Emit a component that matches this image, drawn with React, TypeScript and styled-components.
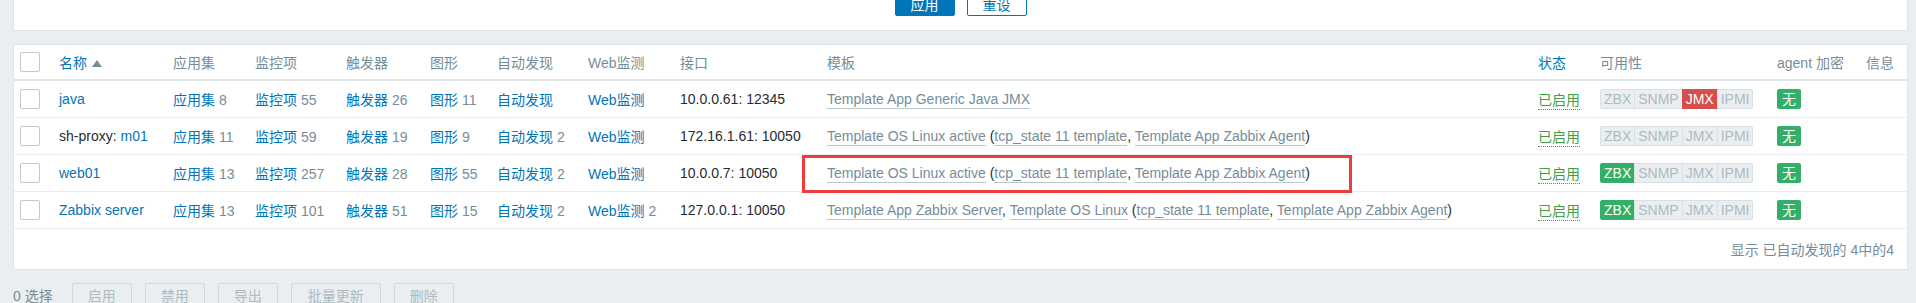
import React from 'react';
import styled, { createGlobalStyle } from 'styled-components';

const GlobalStyle = createGlobalStyle`
  body {
    margin: 0;
    background: #ebeef0;
    font-family: "Liberation Sans", Arial, "Noto Sans CJK SC", sans-serif;
    font-size: 14px;
    color: #1f2c33;
  }
`;

const Page = styled.div`
  padding: 0 8px 0 13px;
  margin-top: -8px;
`;

// filter
const FilterPanel = styled.div`
  background: #fff;
  border: 1px solid #dfe4e7;
  border-top: none;
  display: flex;
  justify-content: center;
  gap: 12px;
  padding-bottom: 14px;
`;

const FilterButton = styled.button<{ $primary?: boolean }>`
  box-sizing: border-box;
  width: 60px;
  height: 24px;
  font: inherit;
  border-radius: 2px;
  border: 1px solid #0275b8;
  background: ${(p) => (p.$primary ? '#0275b8' : '#fff')};
  color: ${(p) => (p.$primary ? '#fff' : '#0275b8')};
  padding: 0;
`;

// table
const TablePanel = styled.div`
  position: relative;
  margin-top: 13px;
  background: #fff;
  border: 1px solid #dfe4e7;
`;

const cols = '45px 114px 82px 91px 84px 67px 91px 92px 147px 1fr 62px 177px 89px 41px';

const HeadRow = styled.div`
  display: grid;
  grid-template-columns: ${cols};
  align-items: center;
  height: 34px;
  border-bottom: 2px solid #dfe4e7;
  color: #768d99;
  white-space: nowrap;
`;

const Row = styled.div`
  position: relative;
  display: grid;
  grid-template-columns: ${cols};
  align-items: center;
  height: 36px;
  border-bottom: 1px solid #ebeef0;
  white-space: nowrap;
`;

const CheckCell = styled.div`
  padding-left: 6px;
  display: flex;
  align-items: center;
`;

const Checkbox = styled.span`
  display: block;
  box-sizing: border-box;
  width: 20px;
  height: 20px;
  border: 1px solid #bfc9ce;
  border-radius: 2px;
  background: #fff;
`;

const Cell = styled.div`
  overflow: visible;
`;

const Link = styled.span`
  color: #0275b8;
`;

const SortArrow = styled.span`
  display: inline-block;
  margin-left: 5px;
  width: 0;
  height: 0;
  border-left: 5px solid transparent;
  border-right: 5px solid transparent;
  border-bottom: 7px solid #768d99;
  vertical-align: 1px;
`;

const Count = styled.span`
  color: #768d99;
  margin-left: 4px;
`;

const Template = styled.span`
  color: #768d99;
  border-bottom: 1px solid rgba(118, 141, 153, 0.5);
  padding-bottom: 1px;
`;

const Enabled = styled.span`
  color: #429e47;
  border-bottom: 1px dotted #429e47;
  padding-bottom: 1px;
`;

const Availability = styled.div`
  display: inline-flex;
  height: 20px;
`;

const Badge = styled.span<{ $state?: 'ok' | 'err' }>`
  box-sizing: border-box;
  height: 20px;
  line-height: 18px;
  padding: 0 3px;
  border: 1px solid
    ${(p) => (p.$state === 'ok' ? '#34af67' : p.$state === 'err' ? '#d64e4e' : '#d9e0e3')};
  background: ${(p) => (p.$state === 'ok' ? '#34af67' : p.$state === 'err' ? '#d64e4e' : '#ebeef0')};
  color: ${(p) => (p.$state ? '#fff' : '#acbbc2')};
  & + & {
    margin-left: -1px;
  }
  &:first-child {
    border-radius: 2px 0 0 2px;
  }
  &:last-child {
    border-radius: 0 2px 2px 0;
  }
`;

const NoneBadge = styled.span`
  display: inline-block;
  width: 24px;
  height: 20px;
  line-height: 20px;
  text-align: center;
  background: #34af67;
  color: #fff;
  border-radius: 2px;
`;

const Highlight = styled.div`
  position: absolute;
  left: 788px;
  top: 0;
  width: 550px;
  height: 38px;
  box-sizing: border-box;
  border: 3px solid #ef3b3b;
  pointer-events: none;
`;

const Footer = styled.div`
  height: 40px;
  display: flex;
  align-items: center;
  justify-content: flex-end;
  padding-right: 13px;
  color: #768d99;
`;

// actions
const ActionBar = styled.div`
  margin-top: 13px;
  display: flex;
  align-items: center;
  gap: 13px;
  color: #768d99;
`;

const Selected = styled.span`
  margin-right: 6px;
`;

const ActionButton = styled.button<{ $wide?: boolean }>`
  box-sizing: border-box;
  width: ${(p) => (p.$wide ? '90px' : '60px')};
  height: 24px;
  font: inherit;
  padding: 0;
  border: 1px solid #d0d8dc;
  border-radius: 2px;
  background: #ebeef0;
  color: #acbbc2;
`;

type Avail = { zbx?: boolean; jmx?: boolean };

interface Host {
  name: React.ReactNode;
  apps: number;
  items: number;
  triggers: number;
  graphs: number;
  discovery?: number;
  web?: number;
  iface: string;
  templates: React.ReactNode;
  avail: Avail;
  highlight?: boolean;
}

const linuxActive = (
  <>
    <Template>Template OS Linux active</Template> (<Template>tcp_state 11 template</Template>,{' '}
    <Template>Template App Zabbix Agent</Template>)
  </>
);

const hosts: Host[] = [
  {
    name: <Link>java</Link>,
    apps: 8,
    items: 55,
    triggers: 26,
    graphs: 11,
    iface: '10.0.0.61: 12345',
    templates: <Template>Template App Generic Java JMX</Template>,
    avail: { jmx: true },
  },
  {
    name: (
      <>
        sh-proxy: <Link>m01</Link>
      </>
    ),
    apps: 11,
    items: 59,
    triggers: 19,
    graphs: 9,
    discovery: 2,
    iface: '172.16.1.61: 10050',
    templates: linuxActive,
    avail: {},
  },
  {
    name: <Link>web01</Link>,
    apps: 13,
    items: 257,
    triggers: 28,
    graphs: 55,
    discovery: 2,
    iface: '10.0.0.7: 10050',
    templates: linuxActive,
    avail: { zbx: true },
    highlight: true,
  },
  {
    name: <Link>Zabbix server</Link>,
    apps: 13,
    items: 101,
    triggers: 51,
    graphs: 15,
    discovery: 2,
    web: 2,
    iface: '127.0.0.1: 10050',
    templates: (
      <>
        <Template>Template App Zabbix Server</Template>, <Template>Template OS Linux</Template> (
        <Template>tcp_state 11 template</Template>, <Template>Template App Zabbix Agent</Template>)
      </>
    ),
    avail: { zbx: true },
  },
];

const App: React.FC = () => (
  <Page>
    <GlobalStyle />
    <FilterPanel>
      <FilterButton $primary>应用</FilterButton>
      <FilterButton>重设</FilterButton>
    </FilterPanel>

    <TablePanel>
      <HeadRow>
        <CheckCell>
          <Checkbox />
        </CheckCell>
        <Cell>
          <Link>名称</Link>
          <SortArrow />
        </Cell>
        <Cell>应用集</Cell>
        <Cell>监控项</Cell>
        <Cell>触发器</Cell>
        <Cell>图形</Cell>
        <Cell>自动发现</Cell>
        <Cell>Web监测</Cell>
        <Cell>接口</Cell>
        <Cell>模板</Cell>
        <Cell>
          <Link>状态</Link>
        </Cell>
        <Cell>可用性</Cell>
        <Cell>agent 加密</Cell>
        <Cell>信息</Cell>
      </HeadRow>

      {hosts.map((h, i) => (
        <Row key={i}>
          <CheckCell>
            <Checkbox />
          </CheckCell>
          <Cell>{h.name}</Cell>
          <Cell>
            <Link>应用集</Link>
            <Count>{h.apps}</Count>
          </Cell>
          <Cell>
            <Link>监控项</Link>
            <Count>{h.items}</Count>
          </Cell>
          <Cell>
            <Link>触发器</Link>
            <Count>{h.triggers}</Count>
          </Cell>
          <Cell>
            <Link>图形</Link>
            <Count>{h.graphs}</Count>
          </Cell>
          <Cell>
            <Link>自动发现</Link>
            {h.discovery !== undefined && <Count>{h.discovery}</Count>}
          </Cell>
          <Cell>
            <Link>Web监测</Link>
            {h.web !== undefined && <Count>{h.web}</Count>}
          </Cell>
          <Cell>{h.iface}</Cell>
          <Cell>{h.templates}</Cell>
          <Cell>
            <Enabled>已启用</Enabled>
          </Cell>
          <Cell>
            <Availability>
              <Badge $state={h.avail.zbx ? 'ok' : undefined}>ZBX</Badge>
              <Badge>SNMP</Badge>
              <Badge $state={h.avail.jmx ? 'err' : undefined}>JMX</Badge>
              <Badge>IPMI</Badge>
            </Availability>
          </Cell>
          <Cell>
            <NoneBadge>无</NoneBadge>
          </Cell>
          <Cell />
          {h.highlight && <Highlight />}
        </Row>
      ))}

      <Footer>显示 已自动发现的 4中的4</Footer>
    </TablePanel>

    <ActionBar>
      <Selected>0 选择</Selected>
      <ActionButton>启用</ActionButton>
      <ActionButton>禁用</ActionButton>
      <ActionButton>导出</ActionButton>
      <ActionButton $wide>批量更新</ActionButton>
      <ActionButton>删除</ActionButton>
    </ActionBar>
  </Page>
);

export default App;
